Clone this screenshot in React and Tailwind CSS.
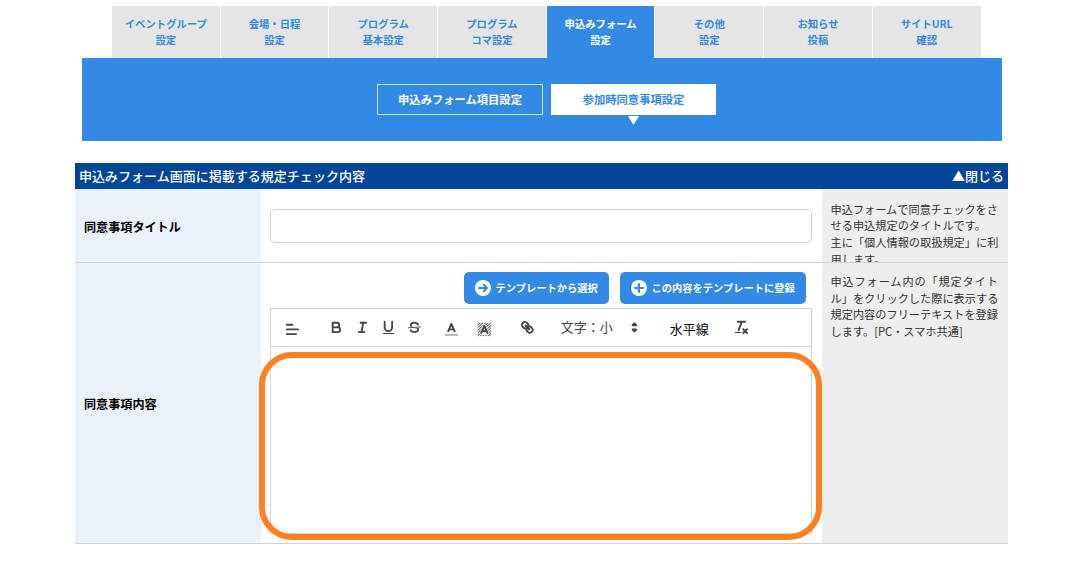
const tabs = [
  ['イベントグループ', '設定'],
  ['会場・日程', '設定'],
  ['プログラム', '基本設定'],
  ['プログラム', 'コマ設定'],
  ['申込みフォーム', '設定'],
  ['その他', '設定'],
  ['お知らせ', '投稿'],
  ['サイトURL', '確認'],
]

const activeTab = 4

function Icon({ className = '', children }) {
  return (
    <svg viewBox="0 0 18 18" fill="none" stroke="#444" strokeWidth="2" strokeLinecap="round" strokeLinejoin="round" className={`h-[16.8px] w-[16.8px] shrink-0 ${className}`} aria-hidden="true">
      {children}
    </svg>
  )
}

function AlignIcon({ className }) {
  return <Icon className={className}><path d="M3 4h6M3 9h12M3 14h10" /></Icon>
}

function BoldIcon({ className }) {
  return <Icon className={className}><path d="M5 4h4.5a2.5 2.5 0 0 1 0 5H5zM5 9h5.5a2.5 2.5 0 0 1 0 5H5z" /></Icon>
}

function ItalicIcon({ className }) {
  return <Icon className={className}><path d="M7 4h6M5 14h6M8 14l2-10" /></Icon>
}

function UnderlineIcon({ className }) {
  return (
    <Icon className={className}>
      <path d="M5 3v6a4 4 0 0 0 8 0V3" />
      <rect x="3" y="15" width="12" height="1" rx="0.5" fill="#444" stroke="none" />
    </Icon>
  )
}

function StrikeIcon({ className }) {
  return (
    <Icon className={className}>
      <path d="M15.5 8.5l-13 1" strokeWidth="1" />
      <path stroke="none" fill="#444" d="M9.007 8C6.542 7.791 6 7.519 6 6.5 6 5.792 7.283 5 9 5c1.571 0 2.765.679 2.969 1.309a1 1 0 0 0 1.9-.617C13.356 4.106 11.354 3 9 3 6.2 3 4 4.538 4 6.5a3.2 3.2 0 0 0 .5 1.843Z" />
      <path stroke="none" fill="#444" d="M8.984 10C11.457 10.208 12 10.479 12 11.5c0 .708-1.283 1.5-3 1.5-1.571 0-2.765-.679-2.969-1.309a1 1 0 1 0-1.9.617C4.644 13.894 6.646 15 9 15c2.8 0 5-1.538 5-3.5a3.2 3.2 0 0 0-.5-1.843Z" />
    </Icon>
  )
}

function ColorIcon({ className }) {
  return (
    <Icon className={className}>
      <path d="M3 15h12" stroke="#b4b4b4" strokeLinecap="square" />
      <path d="M5.5 11L9 3l3.5 8M11.63 9H6.38" />
    </Icon>
  )
}

function BackgroundIcon({ className }) {
  return (
    <Icon className={className}>
      <defs>
        <pattern id="hatch" width="2" height="2" patternUnits="userSpaceOnUse" patternTransform="rotate(45)">
          <rect width="0.9" height="2" fill="#444" stroke="none" />
        </pattern>
      </defs>
      <rect x="1.8" y="1.8" width="14.4" height="14.4" fill="url(#hatch)" stroke="none" />
      <path d="M5.5 13L9 5l3.5 8z" stroke="#fff" strokeWidth="3.4" fill="#fff" />
      <path d="M5.5 13L9 5l3.5 8M11.63 11H6.38" />
    </Icon>
  )
}

function LinkIcon({ className }) {
  return (
    <Icon className={className}>
      <path d="M7 7l4 4" />
      <path d="M8.9 4.577a3.476 3.476 0 0 1 .36 4.679A3.476 3.476 0 0 1 4.577 8.9C3.185 7.5 2.035 6.4 4.217 4.217S7.5 3.185 8.9 4.577Z" />
      <path d="M13.423 9.1a3.476 3.476 0 0 0-4.679-.36 3.476 3.476 0 0 0 .36 4.679c1.392 1.392 2.5 2.542 4.679.36S14.815 10.5 13.423 9.1Z" />
    </Icon>
  )
}

function UpDownIcon({ className }) {
  return <Icon className={className}><path fill="#444" d="M7 11.3l2 2 2-2zM7 6.7l2-2 2 2z" /></Icon>
}

function CleanIcon({ className }) {
  return (
    <Icon className={className}>
      <path d="M5 3h8M6 12l3.35-9M11 11l4 4M15 11l-4 4" />
      <rect x="2" y="14" width="7" height="1" rx="0.5" fill="#444" stroke="none" />
    </Icon>
  )
}

function TemplateButton({ label, icon, className = '' }) {
  return (
    <button type="button" className={`flex h-8 items-center rounded-[5px] bg-[#328ae5] pl-[11px] text-[10.25px] font-bold whitespace-nowrap text-white ${className}`}>
      <svg viewBox="0 0 16 16" fill="none" stroke="#328ae5" strokeWidth="2" className="mr-[4.5px] h-4 w-4 shrink-0" aria-hidden="true">
        <circle cx="8" cy="8" r="8" fill="#fff" stroke="none" />
        <path d={icon} strokeLinecap="round" strokeLinejoin="round" />
      </svg>
      {label}
    </button>
  )
}

function Toolbar() {
  return (
    <div className="flex h-[39px] items-center border border-[#d2d2d2] text-[13px] text-[#444]">
      <AlignIcon className="ml-[12.8px] mt-[4px]" />
      <BoldIcon className="ml-[27.2px]" />
      <ItalicIcon className="ml-[9px]" />
      <UnderlineIcon className="ml-[9.4px]" />
      <StrikeIcon className="ml-[9px]" />
      <ColorIcon className="ml-[20.5px] mt-[4px]" />
      <BackgroundIcon className="ml-[15.9px] mt-[4px]" />
      <LinkIcon className="ml-[27px]" />
      <span className="ml-[24.6px] -mt-px w-[52px] whitespace-nowrap">文字：小</span>
      <UpDownIcon className="ml-[13.6px]" />
      <span className="mt-[2px] ml-[26.7px] w-[39px] whitespace-nowrap text-black">水平線</span>
      <CleanIcon className="ml-[24.3px]" />
    </div>
  )
}

export default function App() {
  return (
    <div className="h-[565px] overflow-hidden bg-white pt-1.5 font-['Noto_Sans_CJK_JP','Noto_Sans',sans-serif]">
      <nav className="ml-[112px] grid h-[52px] w-[869.5px] grid-cols-8 text-center text-[10.35px] leading-[16px] font-bold">
        {tabs.map(([first, second], index) => (
          <a key={index} className={`border-r-[1.5px] border-white bg-clip-padding pt-[10px] ${index === activeTab ? 'bg-[#328ae5] text-white' : 'bg-[#e5e5e5] text-[#328ae5]'}`}>
            {first}<br />{second}
          </a>
        ))}
      </nav>

      <div className="ml-[82px] flex h-[83px] w-[920px] gap-[8px] bg-[#328ae5] pt-[26px] pl-[295px] text-[11.3px] font-bold">
        <a className="flex h-[31px] w-[166px] items-center justify-center border border-[#cfe3f9] text-white">申込みフォーム項目設定</a>
        <div className="flex w-[165px] flex-col items-center">
          <a className="flex h-[31px] w-full items-center justify-center bg-white text-[#328ae5]">参加時同意事項設定</a>
          <svg viewBox="0 0 11 9" className="mt-px mr-px h-[9px] w-[11px]" aria-hidden="true"><path d="M0 0h11L5.5 9z" fill="#fff" /></svg>
        </div>
      </div>

      <main className="mt-[22px] ml-[75px] w-[933px]">
        <h2 className="flex h-[26px] items-center justify-between bg-[#004696] pr-[4px] pb-px pl-[4px] text-[13.03px] font-medium text-white">
          <span>申込みフォーム画面に掲載する規定チェック内容</span>
          <span>▲閉じる</span>
        </h2>

        <section className="flex h-[74px] border-b border-[#d2d2d2]">
          <h3 className="flex w-[186px] items-center bg-[#ebf1f9] pt-[3px] pl-[9px] text-[12.1px] font-bold">同意事項タイトル</h3>
          <div className="flex w-[560.5px] items-center pl-[9px]">
            <input type="text" aria-label="同意事項タイトル" className="h-[34px] w-[542px] rounded-[5px] border border-[#d2d2d2] bg-white outline-none" />
          </div>
          <p className="flex-1 overflow-hidden bg-[#eee] pt-[11.5px] pl-[9px] text-[11.2px] leading-[16.7px] whitespace-nowrap text-[#333]">
            申込フォームで同意チェックをさ<br />せる申込規定のタイトルです。<br />主に「個人情報の取扱規定」に利<br />用します。
          </p>
        </section>

        <section className="flex h-[281px] border-b border-[#d2d2d2]">
          <h3 className="flex w-[186px] items-center bg-[#ebf1f9] pt-[2px] pl-[9px] text-[12.1px] font-bold">同意事項内容</h3>
          <div className="relative w-[560.5px] pt-[9px] pr-[9.5px] pl-[9px]">
            <div className="flex justify-end gap-[11px] pr-[6px]">
              <TemplateButton label="テンプレートから選択" icon="M4 8h8M8.8 4.8L12 8l-3.2 3.2" className="w-[145px]" />
              <TemplateButton label="この内容をテンプレートに登録" icon="M4 8h8M8 4v8" className="w-[186px]" />
            </div>
            <div className="mt-[4px]">
              <Toolbar />
              <div className="h-[187px] border border-t-0 border-[#d2d2d2]" />
            </div>
            {/* highlight ring around the editor body */}
            <div className="absolute top-[89px] -left-[2px] h-[188px] w-[563px] rounded-[33px] border-6 border-[#ff8022]" />
          </div>
          <p className="flex-1 overflow-hidden bg-[#eee] pt-[10px] pl-[9px] text-[11.2px] leading-[16.7px] whitespace-nowrap text-[#333]">
            <span className="tracking-[0.85px]">申込フォーム内の「規定タイト</span><br />ル」をクリックした際に表示する<br />規定内容のフリーテキストを登録<br />します。[PC・スマホ共通]
          </p>
        </section>
      </main>
    </div>
  )
}
